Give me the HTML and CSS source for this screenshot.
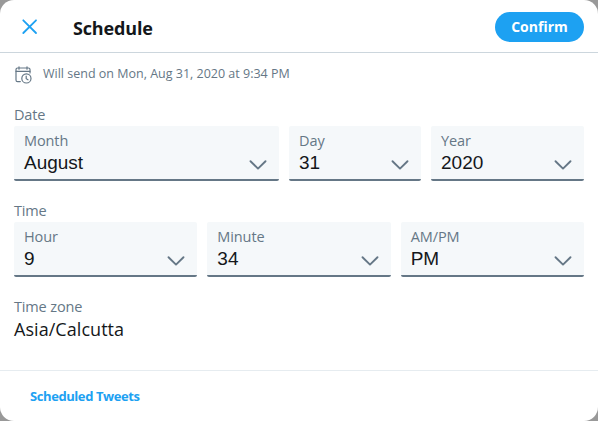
FILE: index.html
```html
<!DOCTYPE html>
<html lang="en">
<head>
    <meta charset="UTF-8">
    <meta name="viewport" content="width=device-width, initial-scale=1.0">
    <title>Schedule</title>
    <link rel="stylesheet" href="styles.css">
</head>
<body>
    <svg class="symbols" width="0" height="0">
        <symbol id="chevron" viewBox="0 0 18 12">
            <path d="M1.5 2.2 L9 9.6 L16.5 2.2" fill="none" stroke="currentColor" stroke-width="1.9" stroke-linecap="round" stroke-linejoin="round"/>
        </symbol>
    </svg>

    <div class="modal">
        <header class="modal-header">
            <svg class="close" viewBox="0 0 16 16">
                <path d="M1.3 1.3 L14 14 M14 1.3 L1.3 14" fill="none" stroke="currentColor" stroke-width="1.8" stroke-linecap="round"/>
            </svg>
            <h1 class="title">Schedule</h1>
            <button class="confirm" type="button">Confirm</button>
        </header>

        <main class="content">
            <div class="send-info">
                <svg class="calendar" viewBox="0 0 18 18">
                    <g fill="none" stroke="currentColor" stroke-width="1.2" stroke-linecap="round">
                        <path d="M5.3 15.6 H2.6 Q1 15.6 1 14 V3.6 Q1 2 2.6 2 H13.4 Q15 2 15 3.6 V7"/>
                        <path d="M1 5.3 H15 M4 .8 V3.2 M12 .8 V3.2"/>
                        <circle cx="11.4" cy="12.4" r="4.6"/>
                        <path d="M11.2 10 V12.7 L13 13.8"/>
                    </g>
                </svg>
                <span class="send-text">Will send on Mon, Aug 31, 2020 at 9:34 PM</span>
            </div>

            <section class="group">
                <h2 class="label">Date</h2>
                <div class="fields">
                    <div class="field month">
                        <span class="field-name">Month</span>
                        <span class="field-value">August</span>
                        <svg class="chevron"><use href="#chevron"/></svg>
                    </div>
                    <div class="field day">
                        <span class="field-name">Day</span>
                        <span class="field-value">31</span>
                        <svg class="chevron"><use href="#chevron"/></svg>
                    </div>
                    <div class="field year">
                        <span class="field-name">Year</span>
                        <span class="field-value">2020</span>
                        <svg class="chevron"><use href="#chevron"/></svg>
                    </div>
                </div>
            </section>

            <section class="group">
                <h2 class="label">Time</h2>
                <div class="fields">
                    <div class="field">
                        <span class="field-name">Hour</span>
                        <span class="field-value">9</span>
                        <svg class="chevron"><use href="#chevron"/></svg>
                    </div>
                    <div class="field">
                        <span class="field-name">Minute</span>
                        <span class="field-value">34</span>
                        <svg class="chevron"><use href="#chevron"/></svg>
                    </div>
                    <div class="field">
                        <span class="field-name">AM/PM</span>
                        <span class="field-value">PM</span>
                        <svg class="chevron"><use href="#chevron"/></svg>
                    </div>
                </div>
            </section>

            <section class="group">
                <h2 class="label">Time zone</h2>
                <p class="timezone">Asia/Calcutta</p>
            </section>
        </main>

        <footer class="modal-footer">
            <a class="scheduled">Scheduled Tweets</a>
        </footer>
    </div>
</body>
</html>
```

FILE: styles.css
```css
:root {
    --blue: #1da1f2;
    --gray: #657786;
    --text: #14171a;
    --field: #f5f8fa;
}

* {
    box-sizing: border-box;
}

body {
    margin: 0;
    background-color: #999;
    color: var(--text);
    font-family: "Open Sans", "Noto Sans", sans-serif;
}

.symbols {
    position: absolute;
}

.modal {
    display: flex;
    flex-direction: column;
    height: 421px;
    background-color: #fff;
    border-radius: 14px;
    overflow: hidden;
}

.modal-header {
    display: flex;
    flex-shrink: 0;
    align-items: center;
    height: 53px;
    padding: 1px 14px 0 22px;
    border-bottom: 1px solid #ccd6dd;
}

.close {
    width: 16px;
    height: 16px;
    color: var(--blue);
}

.title {
    flex: 1;
    margin: 3px 0 0 35px;
    font-size: 18px;
    font-weight: 700;
    line-height: 24px;
    letter-spacing: -0.15px;
}

.confirm {
    width: 89px;
    height: 30px;
    padding: 0;
    border: 0;
    border-radius: 15px;
    background-color: var(--blue);
    color: #fff;
    font-family: inherit;
    font-size: 14px;
    font-weight: 700;
}

.content {
    flex: 1;
    min-height: 0;
    padding: 0 14px;
}

.send-info {
    display: flex;
    align-items: center;
    height: 43px;
    color: var(--gray);
}

.calendar {
    width: 18px;
    height: 18px;
    margin: 1px 10px 0 1px;
}

.send-text {
    margin-top: -2px;
    font-size: 12.5px;
}

.group {
    height: 96px;
    padding-top: 8px;
}

.label {
    margin: 0;
    color: var(--gray);
    font-size: 14.5px;
    font-weight: 400;
    line-height: 22px;
    letter-spacing: -0.15px;
}

.fields {
    display: flex;
    gap: 10px;
}

.field {
    display: grid;
    flex: 1;
    grid-template-columns: 1fr 18px;
    grid-template-rows: 20px 23px;
    height: 55px;
    padding: 5px 12px 0 10px;
    background-color: var(--field);
    border-bottom: 2px solid var(--gray);
    border-radius: 2px;
}

.month {
    flex: 0 0 265px;
}

.day {
    flex: 0 0 132px;
}

.field-name {
    grid-column: 1 / 3;
    color: var(--gray);
    font-size: 14.5px;
    line-height: 20px;
    letter-spacing: -0.1px;
}

.field-value {
    font-family: "Liberation Sans", Arial, sans-serif;
    font-size: 19px;
    line-height: 23px;
}

.chevron {
    width: 18px;
    height: 12px;
    margin-top: 8px;
    color: var(--gray);
}

.timezone {
    margin: 0;
    font-size: 18px;
    line-height: 22px;
    letter-spacing: 0.05px;
}

.modal-footer {
    flex-shrink: 0;
    height: 51px;
    padding: 14px 30px;
    border-top: 1px solid #e6ecf0;
}

.scheduled {
    display: block;
    color: var(--blue);
    font-size: 13px;
    font-weight: 700;
    line-height: 22px;
    letter-spacing: -0.42px;
}
```
